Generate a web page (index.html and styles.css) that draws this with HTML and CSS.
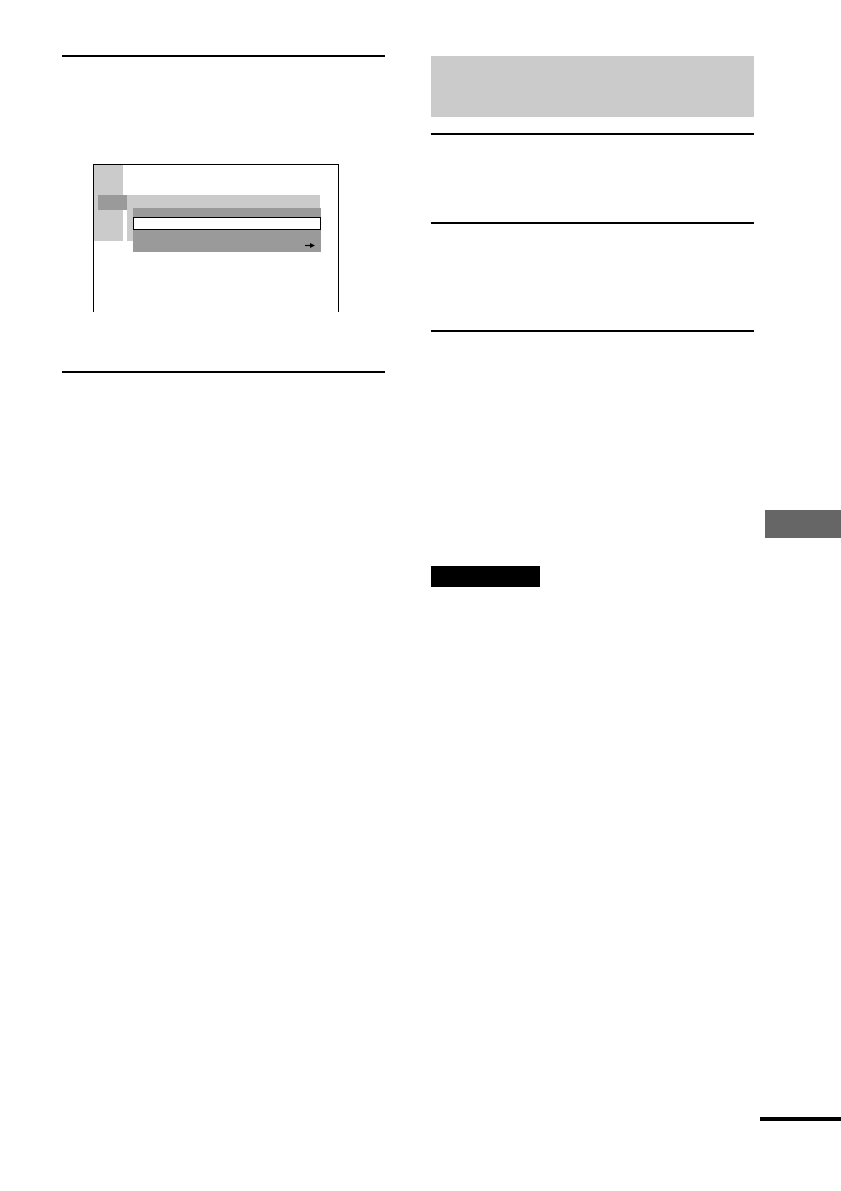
FILE: index.html
```html
<!DOCTYPE html>
<html lang="en">
<head>
    <meta charset="UTF-8">
    <meta name="viewport" content="width=device-width, initial-scale=1.0">
    <title>Manual page</title>
    <link rel="stylesheet" href="styles.css">
</head>
<body>
    <div class="page">
        <!-- left column: step with menu screen -->
        <div class="col col-left">
            <div class="rule"></div>

            <div class="screen">
                <div class="icon-strip"></div>
                <div class="icon-selected"></div>
                <div class="menu-bar"></div>
                <div class="menu-panel">
                    <div class="menu-row"></div>
                    <svg class="menu-arrow" width="10" height="5" viewBox="0 0 10 5">
                        <line x1="0" y1="2.5" x2="6" y2="2.5" stroke="#000" stroke-width="1.2"/>
                        <polygon points="5,0 10,2.5 5,5" fill="#000"/>
                    </svg>
                </div>
            </div>

            <div class="rule rule-bottom"></div>
        </div>

        <!-- right column: section heading and settings -->
        <div class="col col-right">
            <div class="heading-box"></div>
            <div class="rule rule-1"></div>
            <div class="rule rule-2"></div>
            <div class="rule rule-3"></div>
            <div class="note-label"></div>
        </div>

        <!-- page edge: thumb tab and continued mark -->
        <div class="edge">
            <div class="thumb-tab"></div>
            <div class="continued"></div>
        </div>
    </div>
</body>
</html>
```

FILE: styles.css
```css
* {
    box-sizing: border-box;
}
body {
    margin: 0;
    background: #fff;
    font-family: 'Liberation Serif', serif;
}
.page {
    display: flex;
    height: 1191px;
    padding: 55px 0 0 62px;
}
.col {
    display: flex;
    flex-direction: column;
}
.col-left {
    width: 323px;
}
.col-right {
    width: 323px;
    margin-left: 46px;
}
.rule {
    height: 2px;
    background: #000;
}

/* on-screen menu picture */
.screen {
    margin: 107px 0 0 31px;
    width: 246px;
    height: 148px;
    border: 1px solid #000;
    border-bottom: none;
    display: grid;
    grid-template-columns: 4px 25px 4px 6px 188px 1fr;
    grid-template-rows: 30px 13px 2px 31px 11px 1fr;
}
.icon-strip {
    grid-column: 1 / 3;
    grid-row: 1 / 5;
    background: #cbcbcb;
}
.icon-selected {
    grid-column: 2 / 4;
    grid-row: 2 / 4;
    background: #9a9a9a;
}
.menu-bar {
    grid-column: 4 / 6;
    grid-row: 2 / 5;
    background: #cbcbcb;
    margin-right: 1px;
}
.menu-panel {
    grid-column: 5 / 6;
    grid-row: 3 / 6;
    background: #9a9a9a;
    padding-top: 9px;
    display: flex;
    flex-direction: column;
}
.menu-row {
    height: 13px;
    background: #fff;
    border: 1.5px solid #000;
}
.menu-arrow {
    align-self: flex-end;
    margin: 13px 6px 0 0;
}
.rule-bottom {
    margin-top: 59px;
}

/* right column */
.heading-box {
    height: 61px;
    background: #cbcbcb;
    margin-top: 1px;
}
.rule-1 {
    margin-top: 16px;
}
.rule-2 {
    margin-top: 87px;
}
.rule-3 {
    margin-top: 106px;
}
.note-label {
    width: 109px;
    height: 21px;
    background: #000;
    margin-top: 234px;
}

/* page edge */
.edge {
    flex: 1;
    display: flex;
    flex-direction: column;
}
.thumb-tab {
    height: 28px;
    margin: 455px 0 0 11px;
    background: #666;
}
.continued {
    height: 4px;
    margin: auto 0 70px 6px;
    background: #000;
}
```
